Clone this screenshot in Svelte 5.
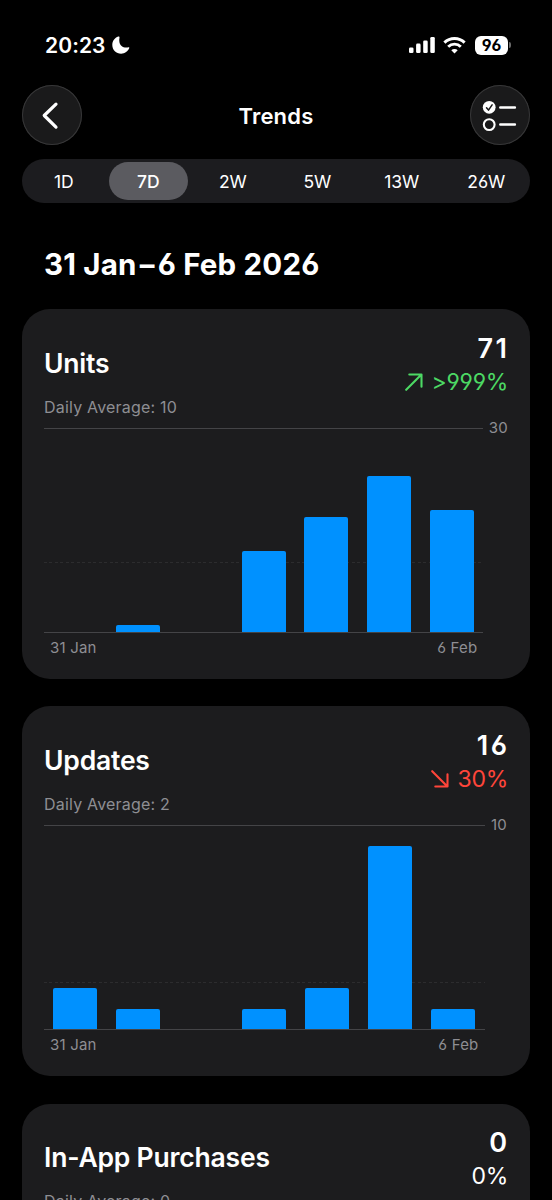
<script lang="ts">
	type Trend = 'up' | 'down' | 'flat';

	interface Metric {
		title: string;
		total: number;
		change: string;
		trend: Trend;
		average: number;
		max: number;
		values: number[];
	}

	const ranges = ['1D', '7D', '2W', '5W', '13W', '26W'];
	let selected = $state('7D');

	const metrics: Metric[] = [
		{
			title: 'Units',
			total: 71,
			change: '>999%',
			trend: 'up',
			average: 10,
			max: 30,
			values: [0, 1, 0, 12, 17, 23, 18]
		},
		{
			title: 'Updates',
			total: 16,
			change: '30%',
			trend: 'down',
			average: 2,
			max: 10,
			values: [2, 1, 0, 1, 2, 9, 1]
		},
		{
			title: 'In-App Purchases',
			total: 0,
			change: '0%',
			trend: 'flat',
			average: 0,
			max: 10,
			values: [0, 0, 0, 0, 0, 0, 0]
		}
	];

	function percent(value: number, max: number) {
		return (value / max) * 100;
	}
</script>

<div class="screen">
	<div class="status-bar">
		<div class="clock">
			<span class="time">20:23</span>
			<svg width="18" height="18" viewBox="0 0 18 18">
				<path
					d="M6.300.5C2.700 1.700.300 5 .300 8.900c0 4.900 3.900 8.800 8.800 8.800 3.700 0 6.800-2.300 8.200-5.600.2-.6-.2-1-.8-.8-4.900 1.200-8.500-1.600-9.100-5.300-.3-1.600-.2-3 .1-4.400.1-.8-.5-1.400-1.200-1.100z"
					fill="#fff"
				/>
			</svg>
		</div>
		<div class="indicators">
			<svg width="26" height="16" viewBox="0 0 26 16" fill="#fff">
				<rect x="0" y="10.400" width="4.500" height="5.600" rx="1.300" />
				<rect x="7.100" y="6.600" width="4.500" height="9.400" rx="1.300" />
				<rect x="14.200" y="3.400" width="4.500" height="12.600" rx="1.300" />
				<rect x="21.300" y="0" width="4.500" height="16" rx="1.300" />
			</svg>
			<svg class="wifi" width="23" height="17" viewBox="0 0 23 17" fill="none" stroke="#fff">
				<path d="M1.400 5.700a14.500 14.500 0 0 1 20.200 0" stroke-width="3" />
				<path d="M5.200 9.700a9 9 0 0 1 12.600 0" stroke-width="2.900" />
				<path d="M11.500 16.600l-3.200-3.300a4.600 4.600 0 0 1 6.400 0z" fill="#fff" stroke="none" />
			</svg>
			<span class="battery">96</span>
			<span class="battery-cap"></span>
		</div>
	</div>

	<header>
		<button class="round" aria-label="Back">
			<svg width="60" height="60" viewBox="0 0 60 60" fill="none" stroke="#fff">
				<path
					d="M34 19.200L22.200 30.500l11.800 11.600"
					stroke-width="3.200"
					stroke-linecap="round"
					stroke-linejoin="round"
				/>
			</svg>
		</button>
		<h1>Trends</h1>
		<button class="round" aria-label="Choose metrics">
			<svg width="60" height="60" viewBox="0 0 60 60" fill="none" stroke-linecap="round">
				<circle cx="19.200" cy="22.300" r="6.400" fill="#fff" />
				<path
					d="M16.500 22.800l2 2.300 3.600-5.300"
					stroke="#1a1a1b"
					stroke-width="1.500"
					stroke-linejoin="round"
				/>
				<circle cx="19.200" cy="39.600" r="5.400" stroke="#fff" stroke-width="2.100" />
				<path d="M30.300 22.400h14.600M30.300 39.600h14.600" stroke="#fff" stroke-width="2.500" />
			</svg>
		</button>
	</header>

	<nav class="ranges">
		{#each ranges as range}
			<button class:active={range === selected} onclick={() => (selected = range)}>{range}</button>
		{/each}
	</nav>

	<h2>31 Jan<span class="dash">–</span>6 Feb 2026</h2>

	<main>
		{#each metrics as metric}
			<section class="card">
				<div class="summary">
					<div class="labels">
						<h3>{metric.title}</h3>
						<p>Daily Average: {metric.average}</p>
					</div>
					<div class="figures">
						<span class="total">{metric.total}</span>
						<span class="change {metric.trend}">
							{#if metric.trend !== 'flat'}
								<svg width="18" height="18" viewBox="0 0 18 18" fill="none" stroke="currentColor">
									<path
										d={metric.trend === 'up'
											? 'M1.200 16.800L16.400 1.600M4.300 1.500h12.200v12.200'
											: 'M1.200 1.200l15.200 15.200M4.300 16.500h12.200V4.300'}
										stroke-width="2.100"
										stroke-linecap="round"
										stroke-linejoin="round"
									/>
								</svg>
							{/if}
							{metric.change}
						</span>
					</div>
				</div>

				<div class="chart">
					<div class="plot">
						<div
							class="average"
							style="bottom: {percent(
								metric.values.reduce((a, b) => a + b, 0) / metric.values.length,
								metric.max
							)}%"
						></div>
						{#each metric.values as value}
							<div class="slot">
								<div class="bar" style="height: {percent(value, metric.max)}%"></div>
							</div>
						{/each}
					</div>
					<span class="max">{metric.max}</span>
					<div class="dates">
						<span>31 Jan</span>
						<span>6 Feb</span>
					</div>
				</div>
			</section>
		{/each}
	</main>
</div>

<style>
	:global(body) {
		background: #000;
	}

	.screen {
		box-sizing: border-box;
		width: 552px;
		height: 1200px;
		padding: 0 22px;
		overflow: hidden;
		background: #000;
		color: #fff;
		font-family: Inter, 'Liberation Sans', sans-serif;
		font-feature-settings: 'cv03', 'cv04';
	}

	h1,
	h2,
	h3,
	p {
		margin: 0;
	}

	button {
		padding: 0;
		border: none;
		background: none;
		color: inherit;
		font: inherit;
		font-feature-settings: inherit;
		cursor: pointer;
	}

	svg {
		display: block;
		flex: none;
	}

	.status-bar {
		display: flex;
		align-items: center;
		justify-content: space-between;
		height: 85px;
		padding: 5px 19px 0 23px;
		box-sizing: border-box;
	}

	.clock {
		display: flex;
		align-items: center;
		gap: 6px;
	}

	.time {
		font-size: 21px;
		font-weight: 600;
		letter-spacing: 0.1px;
	}

	.indicators {
		display: flex;
		align-items: center;
	}

	.wifi {
		margin: 0 9px 0 8px;
	}

	.battery {
		width: 33px;
		height: 19px;
		border-radius: 6px;
		background: #fff;
		color: #000;
		font-size: 16px;
		font-weight: 700;
		line-height: 19px;
		text-align: center;
	}

	.battery-cap {
		width: 2px;
		height: 6px;
		margin-left: 1px;
		border-radius: 0 2px 2px 0;
		background: #6a6a6a;
	}

	header {
		display: flex;
		align-items: center;
		justify-content: space-between;
	}

	.round {
		width: 60px;
		height: 60px;
		border-radius: 50%;
		background: #1a1a1b;
		box-shadow: inset 0 0 0 1px #373738;
	}

	h1 {
		padding-top: 1px;
		font-size: 22px;
		font-weight: 600;
		line-height: 28px;
		letter-spacing: 0.2px;
	}

	.ranges {
		display: grid;
		grid-template-columns: repeat(6, 1fr);
		column-gap: 5px;
		height: 44px;
		margin-top: 14px;
		padding: 3px 4px 3px 2px;
		box-sizing: border-box;
		border-radius: 22px;
		background: #1c1c1f;
	}

	.ranges button {
		border-radius: 19px;
		font-size: 17.5px;
		font-weight: 400;
		letter-spacing: -0.1px;
	}

	.ranges .active {
		background: #5b5b60;
		font-weight: 500;
	}

	h2 {
		margin: 43px 0 27.2px 22px;
		font-size: 29.5px;
		font-weight: 700;
		line-height: 36px;
		letter-spacing: 0.2px;
	}

	.dash {
		margin: 0 3px;
	}

	main {
		display: flex;
		flex-direction: column;
		gap: 27.8px;
	}

	.card {
		flex: none;
		box-sizing: border-box;
		height: 369.4px;
		padding: 22px;
		border-radius: 28px;
		background: #1c1c1e;
	}

	.summary {
		display: flex;
		justify-content: space-between;
		height: 96.6px;
	}

	h3 {
		padding-top: 14.7px;
		font-size: 26.5px;
		font-weight: 600;
		line-height: 34px;
		letter-spacing: -0.2px;
	}

	p {
		margin-top: 16.8px;
		color: #8e8e93;
		font-size: 16px;
		line-height: 20px;
		letter-spacing: 0.2px;
	}

	.figures {
		display: flex;
		flex-direction: column;
		align-items: flex-end;
		padding-top: 0.4px;
	}

	.total {
		margin-right: -1.5px;
		font-size: 27px;
		font-weight: 600;
		line-height: 33px;
		letter-spacing: 2.5px;
	}

	.change {
		display: flex;
		align-items: center;
		gap: 9px;
		font-size: 23px;
		font-feature-settings: 'cv03', 'cv04', 'calt' 0;
		line-height: 34px;
		letter-spacing: -0.3px;
	}

	.up {
		color: #4cd964;
	}

	.down {
		color: #ff453a;
	}

	.chart {
		display: grid;
		grid-template-columns: 1fr auto;
		column-gap: 5.5px;
		color: #8e8e93;
		font-size: 15px;
		line-height: 20px;
		letter-spacing: 0.2px;
	}

	.plot {
		position: relative;
		display: flex;
		height: 203px;
		border-top: 1px solid #444447;
		border-bottom: 1px solid #444447;
	}

	/* dashed marker sitting behind the bars at the mean value */
	.average {
		position: absolute;
		left: 0;
		right: 0;
		height: 1px;
		background: repeating-linear-gradient(90deg, #2c2c2e 0 3px, transparent 3px 5.500px);
	}

	.slot {
		position: relative;
		display: flex;
		flex: 1;
		align-items: flex-end;
		justify-content: center;
	}

	.bar {
		width: 70%;
		border-radius: 2px 2px 0 0;
		background: #0091ff;
	}

	.max {
		min-width: 18px;
		margin-top: -10px;
		text-align: center;
	}

	.dates {
		display: flex;
		justify-content: space-between;
		padding: 5px 6px 0;
	}
</style>
